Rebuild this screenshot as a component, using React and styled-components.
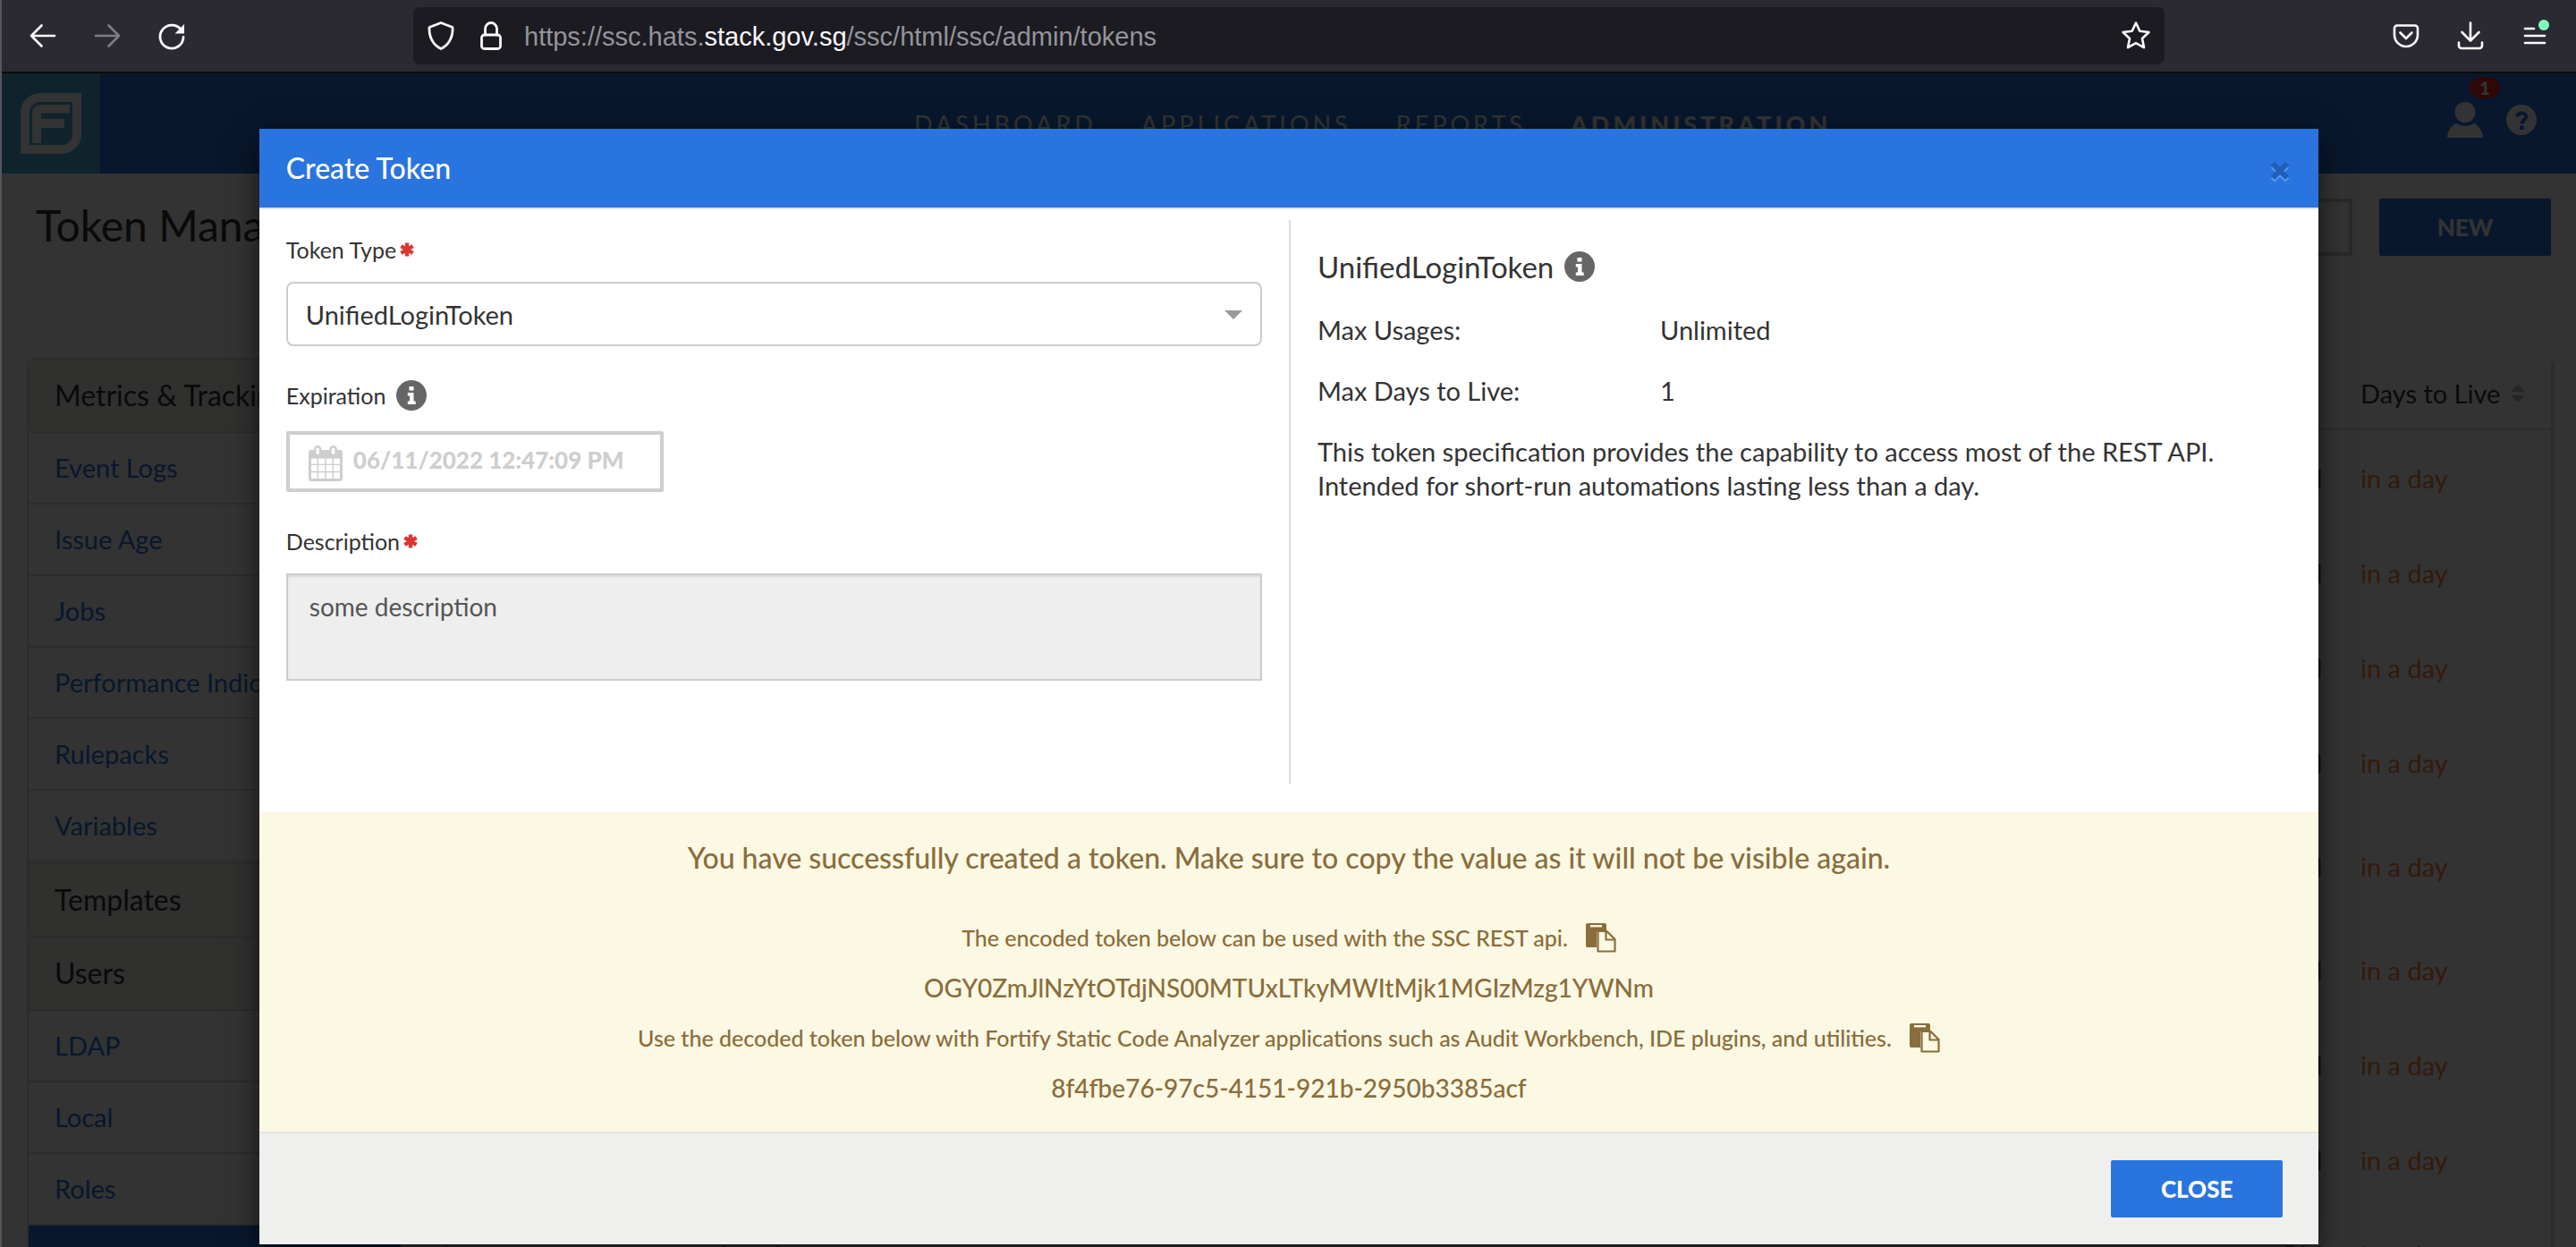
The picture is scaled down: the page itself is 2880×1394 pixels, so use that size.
import React from 'react';
import styled, { createGlobalStyle, css } from 'styled-components';

const blue = '#2a74e0';
const brown = '#8a6d3b';
const cream = '#fbf8e3';
const line = '#dddddd';
const sans = 'Lato, "Open Sans", "Liberation Sans", sans-serif';

const GlobalStyle = createGlobalStyle`
  *, *::before, *::after { box-sizing: border-box; }
  html, body { margin: 0; height: 100%; overflow: hidden; background: #fff; }
  body { font-family: ${sans}; font-size: 29px; color: #333; }
  button, input, select, textarea { font: inherit; color: inherit; margin: 0; }
  button { border: 0; padding: 0; background: none; cursor: pointer; }
  h1, h2, h3, p, dl, dd, ul { margin: 0; padding: 0; font-weight: 400; }
  a { text-decoration: none; color: inherit; }
  svg { display: block; flex: none; }
`;

const Window = styled.div`
  display: flex;
  flex-direction: column;
  height: 100vh;
  border-left: 2px solid #55565a;
`;

/* Browser toolbar */

const Toolbar = styled.header`
  display: flex;
  align-items: center;
  height: 82px;
  flex: none;
  padding: 0 28px;
  background: #2b2a33;
  border-bottom: 2px solid #0c0c0d;
`;

const ToolGroup = styled.div`
  display: flex;
  gap: 36px;
`;

const ToolButton = styled.button`
  display: grid;
  place-items: center;
  width: 36px;
  height: 36px;
  color: #fbfbfe;
  opacity: ${(p) => (p.disabled ? 0.4 : 1)};
`;

const AddressBar = styled.div`
  display: flex;
  align-items: center;
  flex: 1;
  height: 64px;
  margin: 0 252px;
  padding: 0 14px;
  border-radius: 8px;
  background: #1c1b22;
  color: #fbfbfe;
`;

const AddressIcons = styled.div`
  display: flex;
  gap: 22px;
`;

const Address = styled.span`
  flex: 1;
  padding: 2px 0 0 20px;
  font-family: "Liberation Sans", Arial, sans-serif;
  color: #95949b;
  b { font-weight: 400; color: #fbfbfe; }
`;

/* Page below the dialog */

const Viewport = styled.div`
  position: relative;
  flex: 1;
  min-height: 0;
  overflow: hidden;
  background: #fff;
`;

const AppHeader = styled.div`
  display: flex;
  align-items: center;
  height: 112px;
  padding-right: 44px;
  background: ${blue};
  color: #fff;
`;

const LogoBox = styled.a`
  display: grid;
  place-items: center;
  width: 110px;
  height: 112px;
  background: #4aaedb;
`;

const MainNav = styled.nav`
  display: flex;
  flex: 1;
  gap: 50px;
  padding-left: 910px;
  font-size: 27px;
  letter-spacing: 4px;
  text-transform: uppercase;
`;

const NavLink = styled.a`
  font-weight: ${(p) => (p['aria-current'] ? 900 : 400)};
`;

const UserTools = styled.div`
  display: flex;
  align-items: center;
  gap: 26px;
  padding-bottom: 8px;
`;

const UserButton = styled.button`
  position: relative;
`;

const Badge = styled.span`
  position: absolute;
  left: 25px;
  top: -28px;
  width: 34px;
  height: 24px;
  border-radius: 12px;
  background: #e02b20;
  font-size: 20px;
  font-weight: 900;
  line-height: 24px;
  text-align: center;
`;

const TitleRow = styled.div`
  display: flex;
  gap: 30px;
  padding: 28px 28px 114px 38px;
`;

const PageTitle = styled.h1`
  flex: 1;
  font-size: 48px;
  line-height: 60px;
`;

const SearchBox = styled.input`
  width: 400px;
  height: 64px;
  border: 4px solid #cccccc;
  background: #fff;
`;

const Action = styled.button`
  width: 192px;
  height: 64px;
  border-radius: 2px;
  background: ${blue};
  color: #fff;
  font-size: 26px;
  font-weight: 900;
`;

const Content = styled.div`
  display: flex;
  align-items: flex-start;
  gap: 48px;
  padding: 0 24px 0 28px;
`;

const Sidebar = styled.nav`
  width: 420px;
  flex: none;
  border: 2px solid ${line};
  border-radius: 8px 8px 0 0;
`;

const Group = styled.h2`
  height: 82px;
  padding-left: 29px;
  border-bottom: 2px solid ${line};
  background: #eeeeea;
  font-size: 32px;
  line-height: 80px;
`;

const GroupLinks = styled.div`
  border-bottom: 2px solid ${line};
`;

const SideLink = styled.a`
  display: block;
  height: 80px;
  padding-left: 29px;
  border-bottom: 2px solid ${line};
  line-height: 78px;
  white-space: nowrap;
  color: ${(p) => (p['aria-current'] ? '#fff' : blue)};
  background: ${(p) => (p['aria-current'] ? blue : 'transparent')};
`;

const TokenTable = styled.table`
  flex: 1;
  table-layout: fixed;
  margin-top: 4px;
  border: 4px solid ${line};
  border-top: 0;
  border-spacing: 0;
  th { height: 77px; padding: 0; border-bottom: 2px solid ${line}; font-weight: 400; text-align: left; }
  td { height: 106px; padding: 0; }
  td:nth-child(1), th:nth-child(1) { padding-left: 150px; }
  td:nth-child(2), th:nth-child(2) { width: 400px; padding-right: 42px; text-align: right; }
  th:nth-child(3) { width: 213px; padding-bottom: 4px; }
`;

const TallRow = styled.tr`
  td { height: ${(p) => (p.$tall ? 126 : 106)}px; }
`;

const Expiry = styled.td`
  color: #ff8238;
`;

const SortHead = styled.span`
  display: flex;
  align-items: center;
  gap: 12px;
`;

/* Dialog */

const Overlay = styled.div`
  position: absolute;
  inset: 0;
  padding-top: 62px;
  background: rgba(0, 0, 0, 0.8);
`;

const Dialog = styled.section`
  width: 80%;
  margin: 0 auto;
  background: #fff;
  box-shadow: 0 10px 30px rgba(0, 0, 0, 0.6);
`;

const DialogHead = styled.header`
  display: flex;
  align-items: center;
  justify-content: space-between;
  height: 90px;
  padding: 8px 32px 0 30px;
  border-bottom: 2px solid #e5e5e5;
  background: ${blue};
  color: #fff;
`;

const DialogTitle = styled.h2`
  padding-bottom: 8px;
  font-size: 32px;
  font-weight: 500;
  line-height: 40px;
`;

const DialogBody = styled.div`
  display: grid;
  grid-template-columns: 1fr 1fr;
  padding: 12px 0 32px;
`;

const FormColumn = styled.form`
  display: flex;
  flex-direction: column;
  gap: 35px;
  padding: 13px 30px 0;
`;

const Field = styled.div`
  display: flex;
  flex-direction: column;
  gap: 16px;
`;

const LabelRow = styled.div`
  display: flex;
  align-items: center;
  gap: ${(p) => (p.$wide ? 12 : 4)}px;
  height: 40px;
  font-size: 25px;
`;

const SelectBox = styled.div`
  position: relative;
  svg { position: absolute; right: 22px; top: 32px; pointer-events: none; }
`;

const control = css`
  width: 100%;
  border: 2px solid #cccccc;
  outline: 0;
`;

const Select = styled.select`
  ${control}
  height: 72px;
  padding: 0 20px;
  border-radius: 8px;
  background: #fff;
  appearance: none;
`;

const DateButton = styled.button`
  display: flex;
  align-items: center;
  align-self: flex-start;
  gap: 12px;
  width: 422px;
  height: 68px;
  margin-top: 4px;
  padding: 0 21px 4px;
  border: 4px solid #cecece;
  border-radius: 2px;
  color: #cecece;
  font-size: 26px;
  font-weight: 900;
  svg { margin-top: 8px; }
`;

const Description = styled.textarea`
  ${control}
  display: block;
  height: 120px;
  padding: 16px 24px;
  background: #eeeeee;
  box-shadow: inset 0 2px 2px rgba(0, 0, 0, 0.08);
  color: #555;
  font-size: 28px;
  line-height: 38px;
  resize: none;
`;

const InfoColumn = styled.div`
  min-height: 630px;
  padding: 32px 30px 0;
  border-left: 2px solid #dddddd;
`;

const InfoTitle = styled.h3`
  display: flex;
  align-items: center;
  gap: 12px;
  height: 40px;
  margin-bottom: 32px;
  font-size: 33px;
`;

const Facts = styled.dl`
  display: grid;
  grid-template-columns: 383px 1fr;
  row-gap: 30px;
  margin-bottom: 30px;
  line-height: 38px;
`;

const Summary = styled.p`
  line-height: 38px;
`;

const Notice = styled.div`
  padding: 31px 30px 21px;
  background: ${cream};
  color: ${brown};
  font-weight: 500;
`;

const NoticeTitle = styled.h3`
  margin-bottom: 41px;
  font-size: 32px;
  font-weight: 500;
  line-height: 40px;
  text-align: center;
`;

const NoticeLine = styled.div`
  display: flex;
  align-items: center;
  justify-content: center;
  gap: 20px;
  height: 56px;
  font-size: ${(p) => (p.$token ? 28 : 25)}px;
`;

const DialogFoot = styled.footer`
  display: flex;
  justify-content: flex-end;
  padding: 30px 40px;
  border-top: 2px solid #e5e5e5;
  background: #efefed;
`;

/* Icons */

const Stroke = ({ w = 32, h = 32, sw = 2.6, children }) => (
  <svg width={w} height={h} viewBox={`0 0 ${w} ${h}`} fill="none" stroke="currentColor" strokeWidth={sw} strokeLinecap="round" strokeLinejoin="round">
    {children}
  </svg>
);

const InfoIcon = () => (
  <svg width="34" height="34" viewBox="0 0 34 34">
    <circle cx="17" cy="17" r="17" fill="#666" />
    <path fill="#fff" d="M14.5 7h5v4.6h-5zM12.8 14h6.7v9.6h2.2V27h-8.9v-3.400h2.200v-6.200h-2.200z" />
  </svg>
);

const HelpIcon = () => (
  <svg width="34" height="34" viewBox="0 0 34 34">
    <circle cx="17" cy="17" r="17" fill="#fff" />
    <path fill="none" stroke={blue} strokeWidth="4.200" d="M12 13.500c.6-3 2.500-4 5.300-4 3 0 5 1.500 5 4 0 3.800-4.800 3.400-4.800 8" />
    <path fill={blue} d="M15 23.500h4.600v4.500H15z" />
  </svg>
);

const UserIcon = () => (
  <svg width="40" height="40" viewBox="0 0 40 40" fill="#fff">
    <circle cx="20" cy="11.500" r="11.500" />
    <path d="M0 40c.4-7 4-13.500 10.500-16.200C15.500 28 24.500 28 29.500 23.800 36 26.500 39.600 33 40 40z" />
  </svg>
);

const Asterisk = () => (
  <svg width="16" height="16" viewBox="0 0 16 16" stroke="#dd3631" strokeWidth="4.400" strokeLinecap="butt" aria-label="required">
    <path d="M8 .4v15.200M1.400 4.200l13.200 7.600M14.600 4.200L1.400 11.800" />
  </svg>
);

const CalendarIcon = () => (
  <svg width="38" height="40" viewBox="0 0 38 40" fill="#cecece">
    <path fillRule="evenodd" d="M3 5h32a3 3 0 0 1 3 3v29a3 3 0 0 1-3 3H3a3 3 0 0 1-3-3V8a3 3 0 0 1 3-3zm0 9.500v6.200h6.600v-6.200zm8 0v6.200h7.200v-6.200zm8.600 0v6.200h7v-6.200zm8.400 0v6.200h7v-6.200zM3 22v6.800h6.600V22zm8 0v6.800h7.200V22zm8.600 0v6.800h7V22zm8.400 0v6.800h7V22zM3 30.200V37h6.600v-6.800zm8 0V37h7.200v-6.800zm8.600 0V37h7v-6.800zm8.400 0V37h7v-6.800z" />
    <rect x="7.200" y="1.200" width="6" height="10" rx="3" fill="#fff" stroke="#cecece" strokeWidth="2.400" />
    <rect x="24.600" y="1.200" width="6" height="10" rx="3" fill="#fff" stroke="#cecece" strokeWidth="2.400" />
  </svg>
);

const CopyIcon = () => (
  <svg width="34" height="34" viewBox="0 0 34 34">
    <path fill={brown} d="M2 1h19a2 2 0 0 1 2 2v6h-8a3 3 0 0 0-3 3v16H2a2 2 0 0 1-2-2V3a2 2 0 0 1 2-2z" />
    <path fill={cream} d="M5 3h13v2.400H5z" />
    <path fill={cream} stroke={brown} strokeWidth="2.200" strokeLinejoin="round" d="M13.500 10h10l9 9v13.500h-19zM22.500 10v9.500h10" />
  </svg>
);

const CrossIcon = () => (
  <svg width="22" height="24" viewBox="0 0 22 24" fill="none" strokeWidth="6">
    <path stroke="#5a9af2" d="M3 5.500l16 16M19 5.500l-16 16" />
    <path stroke="#1f5fb8" d="M3 3l16 16M19 3L3 19" />
  </svg>
);

const Logo = () => (
  <svg width="68" height="68" viewBox="0 0 68 68" fill="#fff">
    <path fillRule="evenodd" d="M22 0h46v46a22 22 0 0 1-22 22H0V22A22 22 0 0 1 22 0zm0 10a12 12 0 0 0-12 12v36h36a12 12 0 0 0 12-12V10z" />
    <path d="M22 13h33v9.500H25a2 2 0 0 0-2 2V29h26v10H23v17H13V22a9 9 0 0 1 9-9z" />
  </svg>
);

const linkGroups = [
  { title: 'Metrics & Tracking', links: ['Event Logs', 'Issue Age', 'Jobs', 'Performance Indicators', 'Rulepacks', 'Variables'] },
  { title: 'Templates', links: [] },
  { title: 'Users', links: ['LDAP', 'Local', 'Roles', 'Token Management'] },
];

const rows = ['', '', '', '', 'tall', '', '', '', 'svc-acct-mob-nphc'];

export default function App() {
  return (
    <>
      <GlobalStyle />
      <Window>
        <Toolbar>
          <ToolGroup>
            <ToolButton aria-label="Back">
              <Stroke><path d="M3 16h26M14.500 4.500L3 16l11.500 11.500" /></Stroke>
            </ToolButton>
            <ToolButton aria-label="Forward" disabled>
              <Stroke><path d="M3 16h26M17.500 4.500L29 16 17.500 27.500" /></Stroke>
            </ToolButton>
            <ToolButton aria-label="Reload">
              <Stroke sw={2.8}>
                <path d="M27.500 11A13 13 0 1 0 29 17.500" />
                <path fill="currentColor" stroke="none" d="M30 3v10.500H19.500z" />
              </Stroke>
            </ToolButton>
          </ToolGroup>
          <AddressBar>
            <AddressIcons>
              <Stroke w={34} h={34} sw={2.8}><path d="M17 2.500l13 5c.6 9-3 19.500-13 24C7 27 3.400 16.500 4 7.500z" /></Stroke>
              <Stroke w={34} h={34} sw={2.8}>
                <path d="M10.500 16V9a6.500 6.500 0 0 1 13 0v7" />
                <rect x="6.500" y="16" width="21" height="15.500" rx="3" />
              </Stroke>
            </AddressIcons>
            <Address>https://ssc.hats.<b>stack.gov.sg</b>/ssc/html/ssc/admin/tokens</Address>
            <ToolButton aria-label="Bookmark this page">
              <Stroke w={34} h={34} sw={2.6}>
                <path d="M17 2.500l4.300 9.300 10.200 1.200-7.500 7 2 10.100-9-5-9 5 2-10.100-7.500-7 10.200-1.200z" />
              </Stroke>
            </ToolButton>
          </AddressBar>
          <ToolGroup>
            <ToolButton aria-label="Save to Pocket">
              <Stroke>
                <path d="M6 4.500h20a3 3 0 0 1 3 3V15a13 13 0 0 1-26 0V7.500a3 3 0 0 1 3-3z" />
                <path d="M9.500 12.500L16 19l6.500-6.500" />
              </Stroke>
            </ToolButton>
            <ToolButton aria-label="Downloads">
              <Stroke><path d="M16 1.500v20M6.500 12L16 21.500l9.500-9.500M3 23.500V27a3 3 0 0 0 3 3h20a3 3 0 0 0 3-3v-3.500" /></Stroke>
            </ToolButton>
            <ToolButton aria-label="Menu">
              <Stroke w={36} h={36} sw={2.6}>
                <path d="M7 10h10M7 18h22M7 26h22" />
                <circle cx="28" cy="6" r="6" fill="#7fffbe" stroke="none" />
              </Stroke>
            </ToolButton>
          </ToolGroup>
        </Toolbar>

        <Viewport>
          <AppHeader>
            <LogoBox href="#" aria-label="Home"><Logo /></LogoBox>
            <MainNav>
              <NavLink href="#">Dashboard</NavLink>
              <NavLink href="#">Applications</NavLink>
              <NavLink href="#">Reports</NavLink>
              <NavLink href="#" aria-current="page">Administration</NavLink>
            </MainNav>
            <UserTools>
              <UserButton aria-label="Account"><UserIcon /><Badge>1</Badge></UserButton>
              <button aria-label="Help"><HelpIcon /></button>
            </UserTools>
          </AppHeader>
          <TitleRow>
            <PageTitle>Token Management</PageTitle>
            <SearchBox type="search" aria-label="Search tokens" />
            <Action>NEW</Action>
          </TitleRow>
          <Content>
            <Sidebar>
              {linkGroups.map((g) => (
                <React.Fragment key={g.title}>
                  <Group>{g.title}</Group>
                  {g.links.length > 0 && (
                    <GroupLinks>
                      {g.links.map((l) => (
                        <SideLink key={l} href="#" aria-current={l === 'Token Management' ? 'page' : undefined}>{l}</SideLink>
                      ))}
                    </GroupLinks>
                  )}
                </React.Fragment>
              ))}
            </Sidebar>
            <TokenTable>
              <thead>
                <tr>
                  <th />
                  <th />
                  <th>
                    <SortHead>
                      Days to Live
                      <svg width="16" height="20" viewBox="0 0 16 20" fill="#bbb"><path d="M0 8l8-8 8 8zM0 12h16l-8 8z" /></svg>
                    </SortHead>
                  </th>
                </tr>
              </thead>
              <tbody>
                {rows.map((r, i) => (
                  <TallRow key={i} $tall={r === 'tall'}>
                    <td>{r === 'tall' ? '' : r}</td>
                    <td>PM</td>
                    <Expiry>in a day</Expiry>
                  </TallRow>
                ))}
              </tbody>
            </TokenTable>
          </Content>

          <Overlay>
            <Dialog role="dialog" aria-modal="true" aria-labelledby="dialog-title">
              <DialogHead>
                <DialogTitle id="dialog-title">Create Token</DialogTitle>
                <button aria-label="Dismiss"><CrossIcon /></button>
              </DialogHead>
              <DialogBody>
                <FormColumn>
                  <Field>
                    <LabelRow><label htmlFor="type">Token Type</label><Asterisk /></LabelRow>
                    <SelectBox>
                      <Select id="type" defaultValue="UnifiedLoginToken"><option>UnifiedLoginToken</option></Select>
                      <svg width="20" height="10" viewBox="0 0 20 10" fill="#999"><path d="M0 0h20L10 10z" /></svg>
                    </SelectBox>
                  </Field>
                  <Field>
                    <LabelRow $wide><label htmlFor="expiration">Expiration</label><InfoIcon /></LabelRow>
                    <DateButton id="expiration" type="button" disabled>
                      <CalendarIcon />
                      06/11/2022 12:47:09 PM
                    </DateButton>
                  </Field>
                  <Field>
                    <LabelRow><label htmlFor="description">Description</label><Asterisk /></LabelRow>
                    <Description id="description" readOnly value="some description" />
                  </Field>
                </FormColumn>
                <InfoColumn>
                  <InfoTitle>UnifiedLoginToken <InfoIcon /></InfoTitle>
                  <Facts>
                    <dt>Max Usages:</dt>
                    <dd>Unlimited</dd>
                    <dt>Max Days to Live:</dt>
                    <dd>1</dd>
                  </Facts>
                  <Summary>
                    This token specification provides the capability to access most of the REST API. Intended for short-run automations lasting less than a day.
                  </Summary>
                </InfoColumn>
              </DialogBody>
              <Notice>
                <NoticeTitle>You have successfully created a token. Make sure to copy the value as it will not be visible again.</NoticeTitle>
                <NoticeLine>
                  The encoded token below can be used with the SSC REST api.
                  <button aria-label="Copy encoded token"><CopyIcon /></button>
                </NoticeLine>
                <NoticeLine $token>OGY0ZmJlNzYtOTdjNS00MTUxLTkyMWItMjk1MGIzMzg1YWNm</NoticeLine>
                <NoticeLine>
                  Use the decoded token below with Fortify Static Code Analyzer applications such as Audit Workbench, IDE plugins, and utilities.
                  <button aria-label="Copy decoded token"><CopyIcon /></button>
                </NoticeLine>
                <NoticeLine $token>8f4fbe76-97c5-4151-921b-2950b3385acf</NoticeLine>
              </Notice>
              <DialogFoot><Action>CLOSE</Action></DialogFoot>
            </Dialog>
          </Overlay>
        </Viewport>
      </Window>
    </>
  );
}
